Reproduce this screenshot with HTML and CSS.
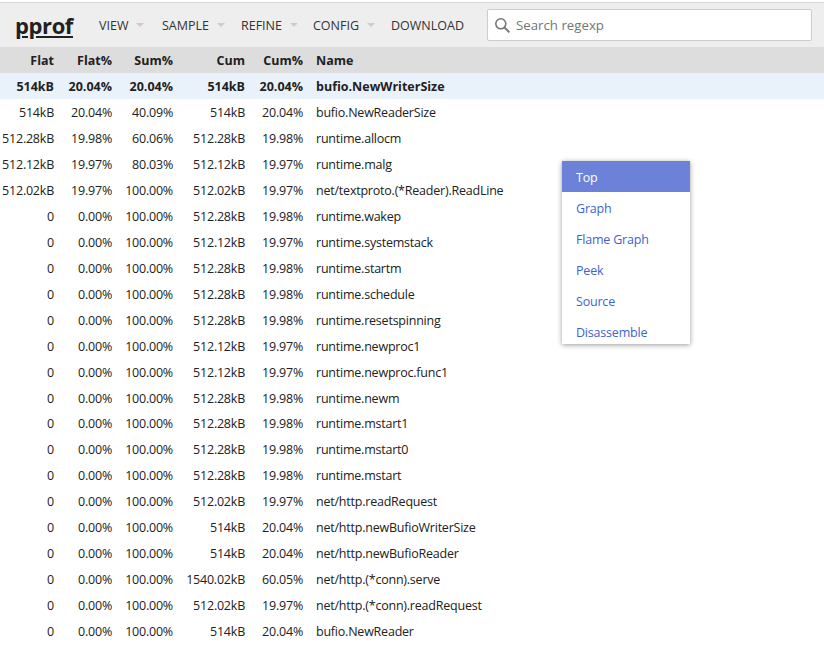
FILE: index.html
```html
<!DOCTYPE html>
<html lang="en">
<head>
<meta charset="utf-8">
<title>pprof</title>
<link rel="stylesheet" href="styles.css">
</head>
<body>
<header class="header">
  <a class="logo" href="#">pprof</a>
  <nav class="nav">
    <span class="nav-item nav-view">VIEW<i class="caret"></i></span>
    <span class="nav-item nav-sample">SAMPLE<i class="caret"></i></span>
    <span class="nav-item nav-refine">REFINE<i class="caret"></i></span>
    <span class="nav-item nav-config">CONFIG<i class="caret"></i></span>
    <span class="nav-item">DOWNLOAD</span>
  </nav>
  <div class="search">
    <svg class="search-icon" width="17" height="17" viewBox="0 0 17 17"><circle cx="6.8" cy="6.8" r="5" fill="none" stroke="#757575" stroke-width="1.6"/><path d="M10.6 10.6 L15.4 15.4" stroke="#757575" stroke-width="2" fill="none"/></svg>
    <span class="search-text">Search regexp</span>
  </div>
</header>
<table class="top">
  <colgroup><col class="c1"><col class="c2"><col class="c3"><col class="c4"><col class="c5"><col></colgroup>
  <thead><tr><th>Flat</th><th>Flat%</th><th>Sum%</th><th>Cum</th><th>Cum%</th><th class="name">Name</th></tr></thead>
  <tbody>
    <tr class="hot"><td>514kB</td><td>20.04%</td><td>20.04%</td><td>514kB</td><td>20.04%</td><td class="name">bufio.NewWriterSize</td></tr>
    <tr><td>514kB</td><td>20.04%</td><td>40.09%</td><td>514kB</td><td>20.04%</td><td class="name">bufio.NewReaderSize</td></tr>
    <tr><td>512.28kB</td><td>19.98%</td><td>60.06%</td><td>512.28kB</td><td>19.98%</td><td class="name">runtime.allocm</td></tr>
    <tr><td>512.12kB</td><td>19.97%</td><td>80.03%</td><td>512.12kB</td><td>19.97%</td><td class="name">runtime.malg</td></tr>
    <tr><td>512.02kB</td><td>19.97%</td><td>100.00%</td><td>512.02kB</td><td>19.97%</td><td class="name">net/textproto.(*Reader).ReadLine</td></tr>
    <tr><td>0</td><td>0.00%</td><td>100.00%</td><td>512.28kB</td><td>19.98%</td><td class="name">runtime.wakep</td></tr>
    <tr><td>0</td><td>0.00%</td><td>100.00%</td><td>512.12kB</td><td>19.97%</td><td class="name">runtime.systemstack</td></tr>
    <tr><td>0</td><td>0.00%</td><td>100.00%</td><td>512.28kB</td><td>19.98%</td><td class="name">runtime.startm</td></tr>
    <tr><td>0</td><td>0.00%</td><td>100.00%</td><td>512.28kB</td><td>19.98%</td><td class="name">runtime.schedule</td></tr>
    <tr><td>0</td><td>0.00%</td><td>100.00%</td><td>512.28kB</td><td>19.98%</td><td class="name">runtime.resetspinning</td></tr>
    <tr><td>0</td><td>0.00%</td><td>100.00%</td><td>512.12kB</td><td>19.97%</td><td class="name">runtime.newproc1</td></tr>
    <tr><td>0</td><td>0.00%</td><td>100.00%</td><td>512.12kB</td><td>19.97%</td><td class="name">runtime.newproc.func1</td></tr>
    <tr><td>0</td><td>0.00%</td><td>100.00%</td><td>512.28kB</td><td>19.98%</td><td class="name">runtime.newm</td></tr>
    <tr><td>0</td><td>0.00%</td><td>100.00%</td><td>512.28kB</td><td>19.98%</td><td class="name">runtime.mstart1</td></tr>
    <tr><td>0</td><td>0.00%</td><td>100.00%</td><td>512.28kB</td><td>19.98%</td><td class="name">runtime.mstart0</td></tr>
    <tr><td>0</td><td>0.00%</td><td>100.00%</td><td>512.28kB</td><td>19.98%</td><td class="name">runtime.mstart</td></tr>
    <tr><td>0</td><td>0.00%</td><td>100.00%</td><td>512.02kB</td><td>19.97%</td><td class="name">net/http.readRequest</td></tr>
    <tr><td>0</td><td>0.00%</td><td>100.00%</td><td>514kB</td><td>20.04%</td><td class="name">net/http.newBufioWriterSize</td></tr>
    <tr><td>0</td><td>0.00%</td><td>100.00%</td><td>514kB</td><td>20.04%</td><td class="name">net/http.newBufioReader</td></tr>
    <tr><td>0</td><td>0.00%</td><td>100.00%</td><td>1540.02kB</td><td>60.05%</td><td class="name">net/http.(*conn).serve</td></tr>
    <tr><td>0</td><td>0.00%</td><td>100.00%</td><td>512.02kB</td><td>19.97%</td><td class="name">net/http.(*conn).readRequest</td></tr>
    <tr><td>0</td><td>0.00%</td><td>100.00%</td><td>514kB</td><td>20.04%</td><td class="name">bufio.NewReader</td></tr>
  </tbody>
</table>
<div class="menu">
  <a class="menu-item selected" href="#">Top</a>
  <a class="menu-item" href="#">Graph</a>
  <a class="menu-item" href="#">Flame Graph</a>
  <a class="menu-item" href="#">Peek</a>
  <a class="menu-item" href="#">Source</a>
  <a class="menu-item" href="#">Disassemble</a>
</div>
</body>
</html>
```
FILE: styles.css
```css
html, body {
  margin: 0;
  padding: 0;
  background: #fff;
}
body {
  font-family: "Open Sans", "Noto Sans", sans-serif;
  font-size: 12.5px;
  color: #212121;
  padding-top: 2px;
  overflow: hidden;
  height: 663px;
}
.header {
  display: flex;
  align-items: center;
  height: 44px;
  background: #eee;
  border-top: 1px solid #d8d8d8;
  box-sizing: content-box;
}
.logo {
  margin-left: 15px;
  width: 84px;
  font-size: 22px;
  letter-spacing: -0.4px;
  font-weight: 700;
  color: #212121;
  text-decoration: underline;
}
.nav {
  display: flex;
  width: 388px;
  flex: none;
}
.nav-item {
  display: flex;
  align-items: center;
  color: #333;
  font-size: 12.5px;
}
.nav-view { width: 63px; }
.nav-sample { width: 79px; }
.nav-refine { width: 72px; }
.nav-config { width: 78px; }
.caret {
  margin-left: 8px;
  width: 0;
  height: 0;
  border-left: 4px solid transparent;
  border-right: 4px solid transparent;
  border-top: 4px solid #ccc;
}
.search {
  display: flex;
  align-items: center;
  box-sizing: border-box;
  width: 325px;
  height: 32px;
  background: #fff;
  border: 1px solid #ccc;
  border-radius: 2px;
  padding-left: 6px;
}
.search-icon { margin-right: 5px; }
.search-text {
  color: #757575;
  font-size: 13.25px;
}
.top {
  width: 100%;
  table-layout: fixed;
  border-collapse: collapse;
}
.c1 { width: 60px; }
.c2 { width: 58px; }
.c3 { width: 61px; }
.c4 { width: 72px; }
.c5 { width: 58px; }
.top th, .top td {
  box-sizing: border-box;
  height: 25.95px;
  padding: 1.1px 6px 0 0;
  text-align: right;
  white-space: nowrap;
  font-size: 12.5px;
}
.top td { letter-spacing: -0.22px; }
.top th { height: 26.25px; padding-top: 0; }
.top thead tr { background: #ddd; }
.top .name {
  text-align: left;
  padding-left: 7px;
}
.hot { background: #e9f2fb; font-weight: 700; }
.top .hot td { letter-spacing: 0; }
.menu {
  position: absolute;
  left: 562px;
  top: 161px;
  width: 128px;
  height: 183px;
  overflow: hidden;
  background: #fff;
  box-shadow: 0 1px 5px rgba(0,0,0,.4);
}
.menu-item {
  display: block;
  height: 31px;
  line-height: 33px;
  padding-left: 14px;
  font-size: 12.5px;
  letter-spacing: -0.2px;
  color: #3f5fd6;
  text-decoration: none;
}
.menu-item.selected {
  background: #6c82d8;
  color: #fff;
}
```
